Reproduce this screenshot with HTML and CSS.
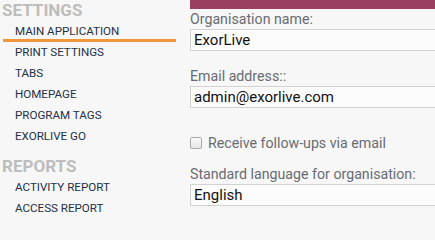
FILE: index.html
```html
<!DOCTYPE html>
<html>
<head>
<meta charset="utf-8">
<link rel="stylesheet" href="styles.css">
</head>
<body>
<div class="page">
  <nav class="sidebar">
    <h2 class="side-heading">SETTINGS</h2>
    <ul class="side-list">
      <li class="side-item active">MAIN APPLICATION</li>
      <li class="side-item">PRINT SETTINGS</li>
      <li class="side-item">TABS</li>
      <li class="side-item">HOMEPAGE</li>
      <li class="side-item">PROGRAM TAGS</li>
      <li class="side-item">EXORLIVE GO</li>
    </ul>
    <h2 class="side-heading reports">REPORTS</h2>
    <ul class="side-list">
      <li class="side-item">ACTIVITY REPORT</li>
      <li class="side-item">ACCESS REPORT</li>
    </ul>
  </nav>
  <main class="main">
    <div class="topbar"></div>
    <div class="field first">
      <label class="field-label">Organisation name:</label>
      <input class="field-input" type="text" value="ExorLive">
    </div>
    <div class="field">
      <label class="field-label">Email address::</label>
      <input class="field-input" type="text" value="admin@exorlive.com">
    </div>
    <label class="check-row">
      <input class="check" type="checkbox">
      <span>Receive follow-ups via email</span>
    </label>
    <div class="field lang">
      <label class="field-label">Standard language for organisation:</label>
      <input class="field-input" type="text" value="English">
    </div>
  </main>
</div>
</body>
</html>
```

FILE: styles.css
```css
html, body {
  margin: 0;
  padding: 0;
  background: #f7f7f7;
  overflow: hidden;
  font-family: Roboto, "Liberation Sans", sans-serif;
}

.page {
  display: flex;
  gap: 14px;
  width: 100%;
}

.sidebar {
  width: 176px;
  flex: none;
}

.side-heading {
  margin: 0 0 1px 2px;
  font-size: 17px;
  line-height: 20px;
  font-weight: 700;
  color: #bdbdbd;
}

.side-heading.reports {
  margin-top: 9px;
}

.side-list {
  list-style: none;
  margin: 0;
  padding: 0;
}

.side-item {
  margin-left: 3px;
  padding: 3px 0 0 12px;
  font-size: 11.6px;
  line-height: 15px;
  color: #233048;
  border-bottom: 3px solid transparent;
}

.side-item.active {
  border-bottom-color: #f0953a;
}

.main {
  flex: 1;
  min-width: 0;
  overflow: hidden;
}

.topbar {
  height: 9px;
  background: #9a3f62;
}

.field {
  display: flex;
  flex-direction: column;
  gap: 2px;
  margin-top: 17px;
}

.field.first {
  margin-top: 2px;
}

.field.lang {
  margin-top: 15px;
}

.field-label {
  font-size: 14.2px;
  line-height: 16px;
  color: #686c72;
}

.field-input {
  box-sizing: border-box;
  width: calc(100% + 12px);
  height: 22px;
  margin: 0;
  padding: 0 3px;
  border: 1px solid #d2d2d2;
  background: #fcfcfc;
  font-family: Roboto, "Liberation Sans", sans-serif;
  font-size: 15px;
  color: #111111;
  outline: none;
}

.check-row {
  display: flex;
  align-items: center;
  gap: 6px;
  margin-top: 27px;
  font-size: 14.2px;
  line-height: 16px;
  color: #686c72;
}

.check {
  appearance: none;
  -webkit-appearance: none;
  box-sizing: border-box;
  flex: none;
  width: 12px;
  height: 12px;
  margin: 0;
  border: 1px solid #a9a9a9;
  border-radius: 2px;
  background: linear-gradient(#fafafa, #e6e6e6);
}
```
